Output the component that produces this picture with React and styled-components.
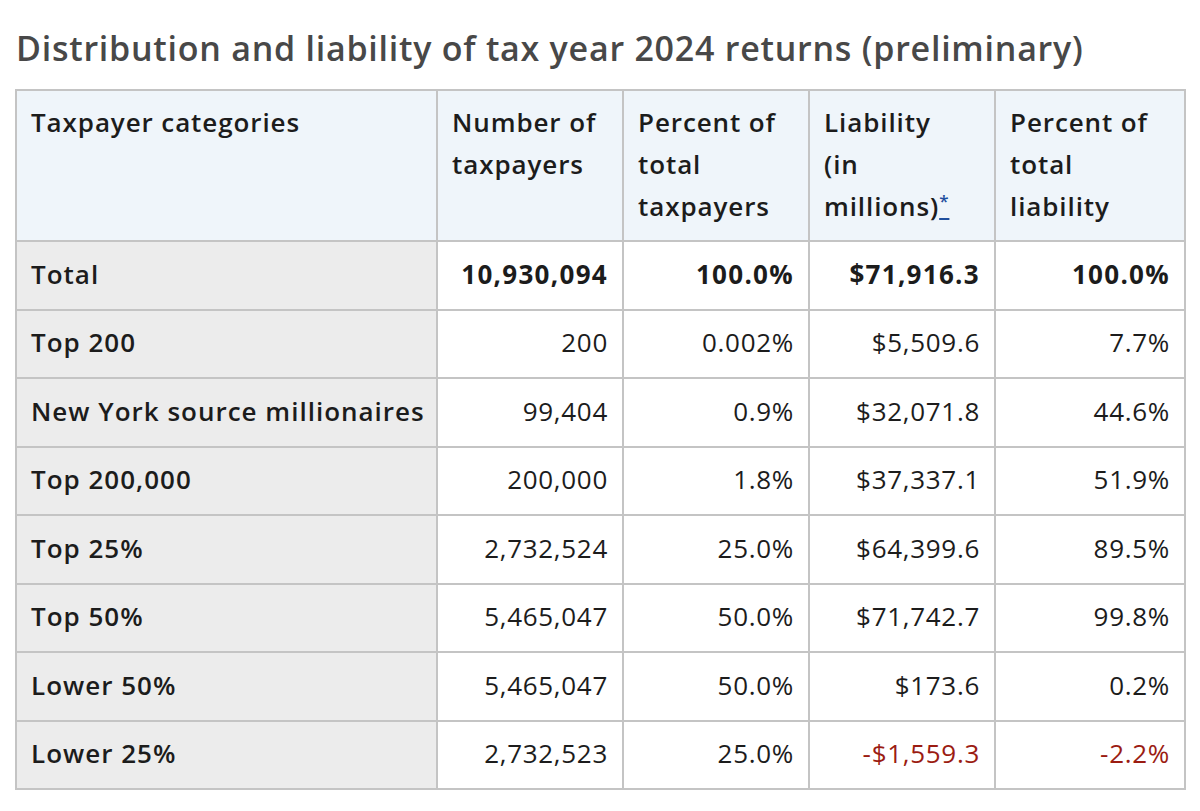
import React from "react";
import styled, { createGlobalStyle } from "styled-components";

const Global = createGlobalStyle`
  html, body { margin: 0; padding: 0; background: #fff; }
  body { font-family: "Open Sans", Lato, sans-serif; color: #1a1a1a; }
`;

const Page = styled.div`
  padding: 27px 15px 0 15px;
  width: 1171px;
`;

const Title = styled.h2`
  margin: 0 0 20px 1px;
  font-size: 34px;
  line-height: 42px;
  font-weight: 600;
  color: #484848;
  white-space: nowrap;
  letter-spacing: 0.75px;
`;

const Table = styled.table`
  border-collapse: collapse;
  width: 1170px;
  table-layout: fixed;
  font-size: 26px;
`;

const Th = styled.th`
  background: #eff5fa;
  border: 2px solid #c4c4c4;
  text-align: left;
  vertical-align: top;
  font-weight: 600;
  line-height: 42px;
  padding: 10px 14px 13px 14px;
  height: 126px;
  box-sizing: content-box;
  color: #1c1c1c;
  letter-spacing: 0.9px;
  white-space: nowrap;
`;

const RowHead = styled.td`
  background: #ececec;
  border: 2px solid #c4c4c4;
  text-align: left;
  font-weight: 600;
  padding: 0 14px 3px 14px;
  height: 63.5px;
  color: #1c1c1c;
  white-space: nowrap;
  letter-spacing: 1px;
`;

const Cell = styled.td`
  border: 2px solid #c4c4c4;
  text-align: right;
  padding: 0 14px 3px 14px;
  height: 63.5px;
  font-weight: ${(p) => (p.$bold ? 700 : 400)};
  letter-spacing: ${(p) => (p.$bold ? "1.3px" : "0.7px")};
  color: ${(p) => (p.$neg ? "#9b1c12" : "#1c1c1c")};
`;

const Note = styled.a`
  color: #1f4f9e;
  font-size: 17px;
  line-height: 0;
  vertical-align: 9px;
  text-decoration: underline;
  text-underline-offset: 11px;
  text-decoration-thickness: 2px;
`;

const rows = [
  ["Total", "10,930,094", "100.0%", "$71,916.3", "100.0%", true],
  ["Top 200", "200", "0.002%", "$5,509.6", "7.7%"],
  ["New York source millionaires", "99,404", "0.9%", "$32,071.8", "44.6%"],
  ["Top 200,000", "200,000", "1.8%", "$37,337.1", "51.9%"],
  ["Top 25%", "2,732,524", "25.0%", "$64,399.6", "89.5%"],
  ["Top 50%", "5,465,047", "50.0%", "$71,742.7", "99.8%"],
  ["Lower 50%", "5,465,047", "50.0%", "$173.6", "0.2%"],
  ["Lower 25%", "2,732,523", "25.0%", "-$1,559.3", "-2.2%", false, true],
];

export default function App() {
  return (
    <Page>
      <Global />
      <Title>Distribution and liability of tax year 2024 returns (preliminary)</Title>
      <Table>
        <colgroup>
          <col style={{ width: 421 }} />
          <col style={{ width: 186 }} />
          <col style={{ width: 186 }} />
          <col style={{ width: 186 }} />
          <col style={{ width: 190 }} />
        </colgroup>
        <thead>
          <tr>
            <Th>Taxpayer categories</Th>
            <Th>
              Number of
              <br />
              taxpayers
            </Th>
            <Th>
              Percent of
              <br />
              total
              <br />
              taxpayers
            </Th>
            <Th>
              Liability
              <br />
              (in
              <br />
              millions)<Note href="#note">*</Note>
            </Th>
            <Th>
              Percent of
              <br />
              total
              <br />
              liability
            </Th>
          </tr>
        </thead>
        <tbody>
          {rows.map(([name, a, b, c, d, bold, neg]) => (
            <tr key={name}>
              <RowHead>{name}</RowHead>
              <Cell $bold={bold}>{a}</Cell>
              <Cell $bold={bold}>{b}</Cell>
              <Cell $bold={bold} $neg={neg}>{c}</Cell>
              <Cell $bold={bold} $neg={neg}>{d}</Cell>
            </tr>
          ))}
        </tbody>
      </Table>
    </Page>
  );
}
